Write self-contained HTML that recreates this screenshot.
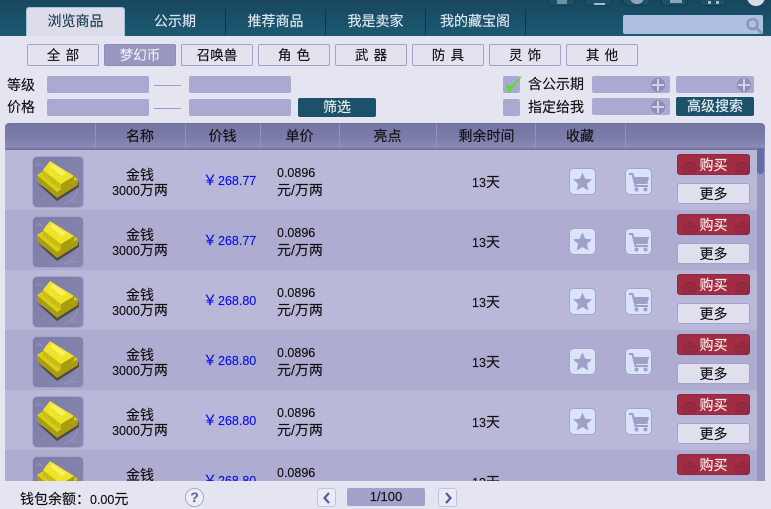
<!DOCTYPE html>
<html lang="zh"><head><meta charset="utf-8"><style>
*{box-sizing:border-box;margin:0;padding:0}
html,body{width:771px;height:509px;overflow:hidden}
body{position:relative;background:#e5e4f1;font:14px/16px "Liberation Sans","Noto Sans CJK SC",sans-serif;color:#111;-webkit-text-stroke:.15px currentColor}
div,svg{position:absolute}
i{font-style:normal;font-size:12.5px}
.top{left:0;top:0;width:771px;height:36px;background:linear-gradient(#17475f,#1c5a72)}
.ti{top:-8px;width:27px;height:14px;border:1px solid #123c50;border-radius:4px;background:#1a5068;overflow:hidden}
.ti b{position:absolute;background:#a9bac6;display:block}
.tab{top:8px;height:27px;line-height:27px;text-align:center;color:#dfe6ee;font-size:14px}
.sep{top:9px;width:1px;height:26px;background:#0e3448}
.cat{top:44px;width:72px;height:22px;line-height:21px;text-align:center;background:#e3e2ee;border:1px solid #a3a2cb;border-radius:2px;font-size:13.5px;word-spacing:1.5px}
.inp{background:#aaa9d2;border-radius:2px;height:17px}
.lb{font-size:14px;line-height:16px}
.ln{width:27px;height:1px;background:#9d9cc6}
.btn{background:#1b5269;color:#e8eef2;text-align:center;border-radius:2px;font-size:14px}
.plus{width:14px;height:14px;top:2px;border-radius:50%;background:#8f8eb9}
.plus:before{content:"";position:absolute;left:1px;top:6px;width:12px;height:2px;background:#d2d1e8}
.plus:after{content:"";position:absolute;left:6px;top:1px;width:2px;height:12px;background:#d2d1e8}
.th{left:5px;top:123px;width:760px;height:27px;background:linear-gradient(#74749f 0,#7c7cab 55%,#8b8ab6 88%,#6e6d9c 100%);border-radius:4px 4px 0 0}
.hc{top:4px;line-height:18px;text-align:center;font-size:14px;color:#111}
.hs{top:1px;width:1px;height:24px;background:#9291bd}
.row{left:5px;width:752px;height:60px}
.l{background:#b9b8d9}.d{background:#aeadd1}
.ico{left:27px;top:6px;width:52px;height:52px;background:linear-gradient(135deg,#7e7da8,#8786ae);border:1px solid #a4a3cb;border-radius:5px}
.n{left:90px;width:90px;text-align:center;font-size:14px;line-height:15px}
.y{left:198px;top:23px;color:#0b10ee;font-size:14px;line-height:15px;font-family:"Noto Sans CJK SC",sans-serif}
.p{left:213px;top:24px;color:#0b10ee;font-size:12.5px;line-height:15px;white-space:nowrap}
.u{left:272px;top:14px;font-size:14px;line-height:17px;white-space:nowrap}
.t{left:441px;top:24px;width:80px;text-align:center;font-size:14px;line-height:16px}
.ib{top:18px;width:27px;height:27px;background:#d9e4fb;border:1px solid #a5a5cc;border-radius:5px}
.buy{left:672px;top:4px;width:73px;height:21px;line-height:20px;background:#a22d42;border:1px solid #8a2a44;border-radius:3px;color:#f8eeee;text-align:center;font-size:14px;overflow:hidden}
.buy svg{top:0;left:0}
.buy span{position:relative}
.more{left:672px;top:33px;width:73px;height:21px;line-height:20px;background:#e0dfee;border:1px solid #a3a2cb;border-radius:3px;text-align:center;font-size:14px}
.bar{left:757px;top:150px;width:8px;height:331px;background:#9897c0}
.thumb{left:757px;top:148px;width:7px;height:26px;background:#5f6fa4;border-radius:3px}
.foot{left:0;top:481px;width:771px;height:28px;background:#e5e4f1}
.pg{top:7px;width:19px;height:19px;background:#ebeaf6;border:1px solid #c4c3de;border-radius:3px}
</style></head><body>
<svg width="0" height="0" style="left:0;top:0"><defs>
<symbol id="gold" viewBox="0 0 50 50">
<path d="M3 9Q6 5 9 9M44 44Q40 47 37 43M31 47Q44 42 46 27" stroke="#9190b8" fill="none" stroke-width="1.5"/>
<path d="M4 26 24 44 46 30 46 25 24 38Z" fill="#3a3820" opacity=".75"/>
<path d="M4 18 12 13 38 18 45 22 45 28 24 41 4 24Z" fill="#a89c10"/>
<path d="M4 18 12 13 38 18 45 22 24 35Z" fill="#d8cc1c"/>
<path d="M10 13 10 19 28 33 28 27Z" fill="#c9bd15"/>
<path d="M28 27 41 19 41 24 28 33Z" fill="#a79c0e"/>
<path d="M10 13 17 4 41 19 28 27Z" fill="#f0e42a"/>
<path d="M17 9 20 7 33 16 29 19Z" fill="#f8f060"/>
</symbol>
<symbol id="star" viewBox="0 0 25 25"><path d="M12.5 3.5 15.2 9.8 22 10.4 16.9 14.9 18.4 21.5 12.5 18 6.6 21.5 8.1 14.9 3 10.4 9.8 9.8Z" fill="#a09fc8"/></symbol>
<symbol id="cart" viewBox="0 0 25 25"><path d="M3 5H6.5L9.5 17H22" fill="none" stroke="#a09fc8" stroke-width="2"/><path d="M7 8H23L21.5 15H9Z" fill="#a09fc8"/><circle cx="10.5" cy="20.5" r="2" fill="#a09fc8"/><circle cx="19.5" cy="20.5" r="2" fill="#a09fc8"/></symbol>
<symbol id="sw" viewBox="0 0 71 19"><g fill="none" stroke="#8e2840" stroke-width="2"><circle cx="12" cy="14" r="6"/><circle cx="12" cy="14" r="2.5"/><circle cx="64" cy="14" r="6"/><circle cx="64" cy="14" r="2.5"/></g></symbol>
</defs></svg>

<div class="top"></div>
<div class="ti" style="left:548px"><b style="left:8px;top:2px;width:10px;height:9px;opacity:.6"></b></div>
<div class="ti" style="left:585px"><b style="left:8px;top:10px;width:11px;height:2px"></b></div>
<div class="ti" style="left:623px"><b style="left:6px;top:-2px;width:14px;height:13px;border-radius:50%;background:#8fa4b2"></b></div>
<div class="ti" style="left:661px"><b style="left:8px;top:7px;width:12px;height:3px;opacity:.8"></b></div>
<div class="ti" style="left:699px"><b style="left:8px;top:8px;width:3px;height:3px"></b><b style="left:16px;top:8px;width:3px;height:3px"></b></div>
<div style="left:747px;top:-12px;width:18px;height:18px;border-radius:50%;background:#d9dde8"></div>
<div class="tab" style="left:26px;top:7px;width:99px;height:29px;background:#dcdcea;color:#1b3d50;border-radius:3px 3px 0 0;border:1px solid #9fc4d4;border-bottom:0">浏览商品</div>
<div class="tab" style="left:125px;width:100px">公示期</div>
<div class="sep" style="left:225px"></div>
<div class="tab" style="left:226px;width:99px">推荐商品</div>
<div class="sep" style="left:325px"></div>
<div class="tab" style="left:326px;width:99px">我是卖家</div>
<div class="sep" style="left:425px"></div>
<div class="tab" style="left:426px;width:98px">我的藏宝阁</div>
<div class="sep" style="left:525px"></div>
<div style="left:623px;top:15px;width:140px;height:19px;background:#adc0e3;border-radius:2px"></div>
<svg style="left:744px;top:15px" width="20" height="19" viewBox="0 0 20 19"><circle cx="8.5" cy="9" r="5" fill="none" stroke="#8a97b8" stroke-width="2.6"/><path d="M12.5 13l5 5" stroke="#8a97b8" stroke-width="3"/></svg>

<div class="cat" style="left:27px">全 部</div>
<div class="cat" style="left:104px;background:#9897c0;color:#eeeef8;border-color:#8d8cb8">梦幻币</div>
<div class="cat" style="left:181px">召唤兽</div>
<div class="cat" style="left:258px">角 色</div>
<div class="cat" style="left:335px">武 器</div>
<div class="cat" style="left:412px">防 具</div>
<div class="cat" style="left:489px">灵 饰</div>
<div class="cat" style="left:566px">其 他</div>

<div class="lb" style="left:7px;top:77px">等级</div>
<div class="inp" style="left:47px;top:76px;width:102px"></div>
<div class="ln" style="left:154px;top:85px"></div>
<div class="inp" style="left:189px;top:76px;width:102px"></div>
<div class="lb" style="left:7px;top:99px">价格</div>
<div class="inp" style="left:47px;top:99px;width:102px"></div>
<div class="ln" style="left:154px;top:108px"></div>
<div class="inp" style="left:189px;top:99px;width:102px"></div>
<div class="btn" style="left:298px;top:98px;width:78px;height:19px;line-height:19px">筛选</div>

<div class="inp" style="left:503px;top:76px;width:17px;height:17px"></div>
<svg style="left:503px;top:74px" width="20" height="20" viewBox="0 0 20 20"><path d="M3 12.5 6 18.5 18.5 2.5 6.5 13.5 4.5 10.5Z" fill="#63d73b" stroke="#63d73b" stroke-width=".8"/></svg>
<div class="lb" style="left:528px;top:76px">含公示期</div>
<div class="inp" style="left:592px;top:76px;width:78px"><div class="plus" style="left:59px"></div></div>
<div class="inp" style="left:676px;top:76px;width:78px"><div class="plus" style="left:61px"></div></div>
<div class="inp" style="left:503px;top:99px;width:17px;height:17px"></div>
<div class="lb" style="left:528px;top:99px">指定给我</div>
<div class="inp" style="left:592px;top:98px;width:78px"><div class="plus" style="left:59px"></div></div>
<div class="btn" style="left:676px;top:97px;width:78px;height:19px;line-height:19px">高级搜索</div>

<div class="th">
<div class="hs" style="left:90px"></div><div class="hs" style="left:180px"></div><div class="hs" style="left:255px"></div><div class="hs" style="left:334px"></div><div class="hs" style="left:431px"></div><div class="hs" style="left:530px"></div><div class="hs" style="left:620px"></div>
<div class="hc" style="left:90px;width:90px">名称</div>
<div class="hc" style="left:180px;width:75px">价钱</div>
<div class="hc" style="left:255px;width:79px">单价</div>
<div class="hc" style="left:334px;width:97px">亮点</div>
<div class="hc" style="left:432px;width:99px">剩余时间</div>
<div class="hc" style="left:530px;width:90px">收藏</div>
</div>

<div class="row l" style="top:150px"><div class="ico"><svg width="50" height="50"><use href="#gold"/></svg></div><div class="n" style="top:18px">金钱<br><i>3000</i>万两</div><div class="y">￥</div><div class="p">268.77</div><div class="u"><i>0.0896</i><br>元/万两</div><div class="t"><i>13</i>天</div><div class="ib" style="left:564px"><svg width="25" height="25"><use href="#star"/></svg></div><div class="ib" style="left:620px"><svg width="25" height="25"><use href="#cart"/></svg></div><div class="buy"><svg width="71" height="19"><use href="#sw"/></svg><span>购买</span></div><div class="more">更多</div></div>
<div class="row d" style="top:210px"><div class="ico"><svg width="50" height="50"><use href="#gold"/></svg></div><div class="n" style="top:18px">金钱<br><i>3000</i>万两</div><div class="y">￥</div><div class="p">268.77</div><div class="u"><i>0.0896</i><br>元/万两</div><div class="t"><i>13</i>天</div><div class="ib" style="left:564px"><svg width="25" height="25"><use href="#star"/></svg></div><div class="ib" style="left:620px"><svg width="25" height="25"><use href="#cart"/></svg></div><div class="buy"><svg width="71" height="19"><use href="#sw"/></svg><span>购买</span></div><div class="more">更多</div></div>
<div class="row l" style="top:270px"><div class="ico"><svg width="50" height="50"><use href="#gold"/></svg></div><div class="n" style="top:18px">金钱<br><i>3000</i>万两</div><div class="y">￥</div><div class="p">268.80</div><div class="u"><i>0.0896</i><br>元/万两</div><div class="t"><i>13</i>天</div><div class="ib" style="left:564px"><svg width="25" height="25"><use href="#star"/></svg></div><div class="ib" style="left:620px"><svg width="25" height="25"><use href="#cart"/></svg></div><div class="buy"><svg width="71" height="19"><use href="#sw"/></svg><span>购买</span></div><div class="more">更多</div></div>
<div class="row d" style="top:330px"><div class="ico"><svg width="50" height="50"><use href="#gold"/></svg></div><div class="n" style="top:18px">金钱<br><i>3000</i>万两</div><div class="y">￥</div><div class="p">268.80</div><div class="u"><i>0.0896</i><br>元/万两</div><div class="t"><i>13</i>天</div><div class="ib" style="left:564px"><svg width="25" height="25"><use href="#star"/></svg></div><div class="ib" style="left:620px"><svg width="25" height="25"><use href="#cart"/></svg></div><div class="buy"><svg width="71" height="19"><use href="#sw"/></svg><span>购买</span></div><div class="more">更多</div></div>
<div class="row l" style="top:390px"><div class="ico"><svg width="50" height="50"><use href="#gold"/></svg></div><div class="n" style="top:18px">金钱<br><i>3000</i>万两</div><div class="y">￥</div><div class="p">268.80</div><div class="u"><i>0.0896</i><br>元/万两</div><div class="t"><i>13</i>天</div><div class="ib" style="left:564px"><svg width="25" height="25"><use href="#star"/></svg></div><div class="ib" style="left:620px"><svg width="25" height="25"><use href="#cart"/></svg></div><div class="buy"><svg width="71" height="19"><use href="#sw"/></svg><span>购买</span></div><div class="more">更多</div></div>
<div class="row d" style="top:450px"><div class="ico"><svg width="50" height="50"><use href="#gold"/></svg></div><div class="n" style="top:18px">金钱<br><i>3000</i>万两</div><div class="y">￥</div><div class="p">268.80</div><div class="u"><i>0.0896</i><br>元/万两</div><div class="t"><i>13</i>天</div><div class="buy"><svg width="71" height="19"><use href="#sw"/></svg><span>购买</span></div></div>

<div class="bar"></div><div class="thumb"></div>

<div class="foot">
<div style="left:20px;top:10px;font-size:14px;white-space:nowrap">钱包余额：<i>0.00</i>元</div>
<div style="left:185px;top:7px;width:19px;height:19px;border-radius:50%;background:#eeeef8;border:1px solid #aaa9cc;color:#5a6a9a;font-weight:bold;text-align:center;line-height:17px;font-size:14px">?</div>
<div class="pg" style="left:317px"><svg style="left:3px;top:2px" width="12" height="14" viewBox="0 0 12 14"><path d="M8 2 3.5 7 8 12" fill="none" stroke="#4e5f90" stroke-width="2.2"/></svg></div>
<div style="left:347px;top:7px;width:78px;height:18px;background:#a3a2cb;border-radius:2px;text-align:center;line-height:18px;font-size:13px">1/100</div>
<div class="pg" style="left:438px"><svg style="left:3px;top:2px" width="12" height="14" viewBox="0 0 12 14"><path d="M4 2 8.5 7 4 12" fill="none" stroke="#4e5f90" stroke-width="2.2"/></svg></div>
</div>
</body></html>
